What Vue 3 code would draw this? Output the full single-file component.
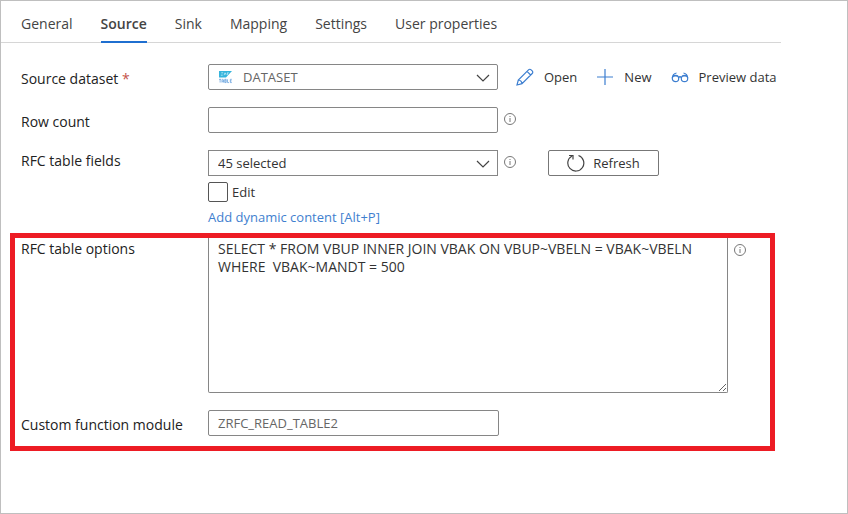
<script setup>
import { ref } from 'vue'

const tabs = ['General', 'Source', 'Sink', 'Mapping', 'Settings', 'User properties']
const activeTab = ref('Source')
const dataset = ref('DATASET')
const rowCount = ref('')
const fields = ref('45 selected')
const editFields = ref(false)
const options = ref('SELECT * FROM VBUP INNER JOIN VBAK ON VBUP~VBELN = VBAK~VBELN\nWHERE  VBAK~MANDT = 500')
const functionModule = ref('ZRFC_READ_TABLE2')
</script>

<template>
  <main class="page">
    <nav class="tabs">
      <button
        v-for="tab in tabs"
        :key="tab"
        type="button"
        class="tab"
        :class="{ active: tab === activeTab }"
        @click="activeTab = tab"
      >{{ tab }}</button>
    </nav>

    <form class="form" @submit.prevent>
      <div class="row">
        <label class="label" for="dataset">Source dataset <span class="required">*</span></label>
        <div class="select-box">
          <svg class="sap" viewBox="0 0 14 14" aria-hidden="true">
            <path d="M0 .5h14L7.500 7.500H0z" fill="#35b4dc" />
            <path d="M2.500 2.500h2M2 5h2M5.500 5l1-2.500 1 2M9 5v-2.500h1.500" fill="none" stroke="#d8f3fb" stroke-width="0.800" />
            <path d="M0 9.500h2.400M1.200 9.500V13M3.200 13v-3l.8-.5.8.5v3M3.200 11.500h1.600M6.200 9.500h1.500v3.500H6.200zM6.200 11.200h1.500M9.200 9.500V13h1.600M13.800 9.500h-1.600V13h1.600M12.200 11.200h1.400" fill="none" stroke="#5f9ddc" stroke-width="0.800" />
          </svg>
          <select id="dataset" v-model="dataset" class="field with-icon">
            <option>DATASET</option>
          </select>
          <svg class="chevron" viewBox="0 0 14 8" aria-hidden="true"><path d="M1 1l6 6 6-6" /></svg>
        </div>
        <div class="actions">
          <button type="button" class="action">
            <svg class="icon" viewBox="0 0 18 18" aria-hidden="true">
              <path d="M1 17l1.300-5L12.500 1.800a1.800 1.800 0 0 1 2.600 0l1.100 1.100a1.800 1.800 0 0 1 0 2.600L6 15.700zM11 3.300L14.700 7M2.300 12c2 .2 3.500 1.700 3.700 3.700" />
            </svg>
            Open
          </button>
          <button type="button" class="action">
            <svg class="icon" viewBox="0 0 18 18" aria-hidden="true"><path d="M9 1v16M1 9h16" /></svg>
            New
          </button>
          <button type="button" class="action">
            <svg class="icon" viewBox="0 0 18 18" aria-hidden="true">
              <circle cx="4.500" cy="10.500" r="3.200" />
              <circle cx="13.500" cy="10.500" r="3.200" />
              <path d="M1.300 7.800h5.200M11.500 7.800h5.200M7.500 9.500c.8-.8 2.200-.8 3 0M1.300 10c.2-2.500 1.500-4.500 4.200-5M16.700 10c-.2-2.500-1.500-4.500-4.200-5" />
            </svg>
            Preview data
          </button>
        </div>
      </div>

      <div class="row">
        <label class="label" for="row-count">Row count</label>
        <input id="row-count" v-model="rowCount" class="field" type="text" />
        <svg class="info" viewBox="0 0 12 12" aria-hidden="true"><circle cx="6" cy="6" r="5.500" /><path d="M6 5v4M6 3v1" /></svg>
      </div>

      <div class="row">
        <label class="label raised" for="fields">RFC table fields</label>
        <div class="stack">
          <div class="select-box">
            <select id="fields" v-model="fields" class="field square">
              <option>45 selected</option>
            </select>
            <svg class="chevron" viewBox="0 0 14 8" aria-hidden="true"><path d="M1 1l6 6 6-6" /></svg>
          </div>
          <label class="check"><input v-model="editFields" type="checkbox" />Edit</label>
          <a class="dynamic" href="#">Add dynamic content [Alt+P]</a>
        </div>
        <div class="side">
          <svg class="info" viewBox="0 0 12 12" aria-hidden="true"><circle cx="6" cy="6" r="5.500" /><path d="M6 5v4M6 3v1" /></svg>
          <button type="button" class="refresh">
            <svg class="icon dark" viewBox="0 0 18 18" aria-hidden="true">
              <path d="M11.500 1.500A8 8 0 1 1 5 2M2 1.500h4v4" />
            </svg>
            Refresh
          </button>
        </div>
      </div>
    </form>

    <section class="highlight">
      <div class="wide-row">
        <label class="label raised" for="options">RFC table options</label>
        <textarea id="options" v-model="options" class="options" spellcheck="false"></textarea>
        <svg class="info" viewBox="0 0 12 12" aria-hidden="true"><circle cx="6" cy="6" r="5.500" /><path d="M6 5v4M6 3v1" /></svg>
      </div>
      <div class="wide-row">
        <label class="label" for="module">Custom function module</label>
        <input id="module" v-model="functionModule" class="field module" type="text" spellcheck="false" />
      </div>
    </section>
  </main>
</template>

<style>
body {
  margin: 0;
  background: #fff;
}
</style>

<style scoped>
.page,
.page * {
  box-sizing: border-box;
}
.page {
  min-height: 100vh;
  border: 1px solid #bfbfbf;
  font-family: "Open Sans", "Noto Sans", sans-serif;
  font-size: 13px;
  line-height: 18px;
  color: #333;
}
button,
input,
select,
textarea {
  font: inherit;
  color: inherit;
  margin: 0;
}
.tabs {
  display: flex;
  gap: 28px;
  margin-right: 66px;
  padding: 0 20px;
  height: 42px;
  border-bottom: 1px solid #d6d6d6;
}
.tab {
  height: 42px;
  padding: 6px 0 0;
  border: 0;
  border-bottom: 2px solid transparent;
  background: none;
  font-size: 14px;
  white-space: nowrap;
  color: #444;
}
.tab.active {
  font-weight: 600;
  border-bottom-color: #1f6fd0;
}
.form {
  display: flex;
  flex-direction: column;
  gap: 17px;
  margin-right: 66px;
  padding: 21px 0 7px 20px;
}
.row {
  display: grid;
  grid-template-columns: 187px minmax(0, 1fr) 283px;
}
.label {
  padding-top: 6px;
  font-size: 14px;
  font-weight: 500;
  color: #222;
  white-space: nowrap;
}
.label.raised {
  padding-top: 2px;
}
.required {
  font-weight: 400;
  color: #c4524a;
}
.field {
  display: block;
  width: 100%;
  height: 26px;
  padding: 0 9px;
  border: 1px solid #868686;
  border-radius: 2px;
  background: #fff;
  appearance: none;
  outline: none;
}
.field.square {
  border-radius: 0;
}
.field.with-icon {
  padding-left: 34px;
  color: #666;
}
.select-box {
  position: relative;
}
.sap {
  position: absolute;
  left: 11px;
  top: 6px;
  width: 13px;
  height: 14px;
}
.chevron {
  position: absolute;
  right: 8px;
  top: 10px;
  width: 14px;
  height: 8px;
  fill: none;
  stroke: #444;
  stroke-width: 1.2;
  pointer-events: none;
}
.info {
  width: 12px;
  height: 12px;
  margin: 6px 0 0 6px;
  fill: none;
  stroke: #777;
}
.actions {
  display: flex;
  gap: 19px;
  padding-left: 18px;
}
.action {
  display: flex;
  align-items: center;
  gap: 10px;
  height: 26px;
  padding: 0;
  border: 0;
  background: none;
  white-space: nowrap;
}
.icon {
  width: 18px;
  height: 18px;
  fill: none;
  stroke: #3c7ed0;
  stroke-width: 1.2;
}
.icon.dark {
  stroke: #444;
}
.stack {
  display: flex;
  flex-direction: column;
}
.check {
  display: flex;
  align-items: center;
  gap: 4px;
  margin-top: 6px;
  height: 20px;
}
.check input {
  appearance: none;
  width: 20px;
  height: 20px;
  border: 1px solid #555;
  border-radius: 2px;
  background: #fff;
}
.check input:checked {
  background: #1f6fd0;
}
.dynamic {
  margin-top: 6px;
  color: #3f7fcf;
  text-decoration: none;
}
.side {
  display: flex;
  gap: 32px;
}
.refresh {
  display: flex;
  align-items: center;
  justify-content: center;
  gap: 8px;
  width: 111px;
  height: 26px;
  padding: 0;
  border: 1px solid #777;
  border-radius: 2px;
  background: #fff;
}
.highlight {
  display: flex;
  flex-direction: column;
  gap: 17px;
  margin: 0 72px 0 9px;
  padding: 0 0 10px 6px;
  border: 5px solid #ed1c24;
}
.wide-row {
  display: grid;
  grid-template-columns: 187px minmax(0, 1fr) 42px;
}
.options {
  display: block;
  width: 100%;
  height: 155px;
  padding: 2px 9px;
  border: 1px solid #868686;
  border-top: 0;
  border-radius: 0 0 2px 2px;
  background: #fff;
  font-size: 14px;
  outline: none;
  resize: both;
}
.field.module {
  width: 56%;
  color: #666;
}
</style>
